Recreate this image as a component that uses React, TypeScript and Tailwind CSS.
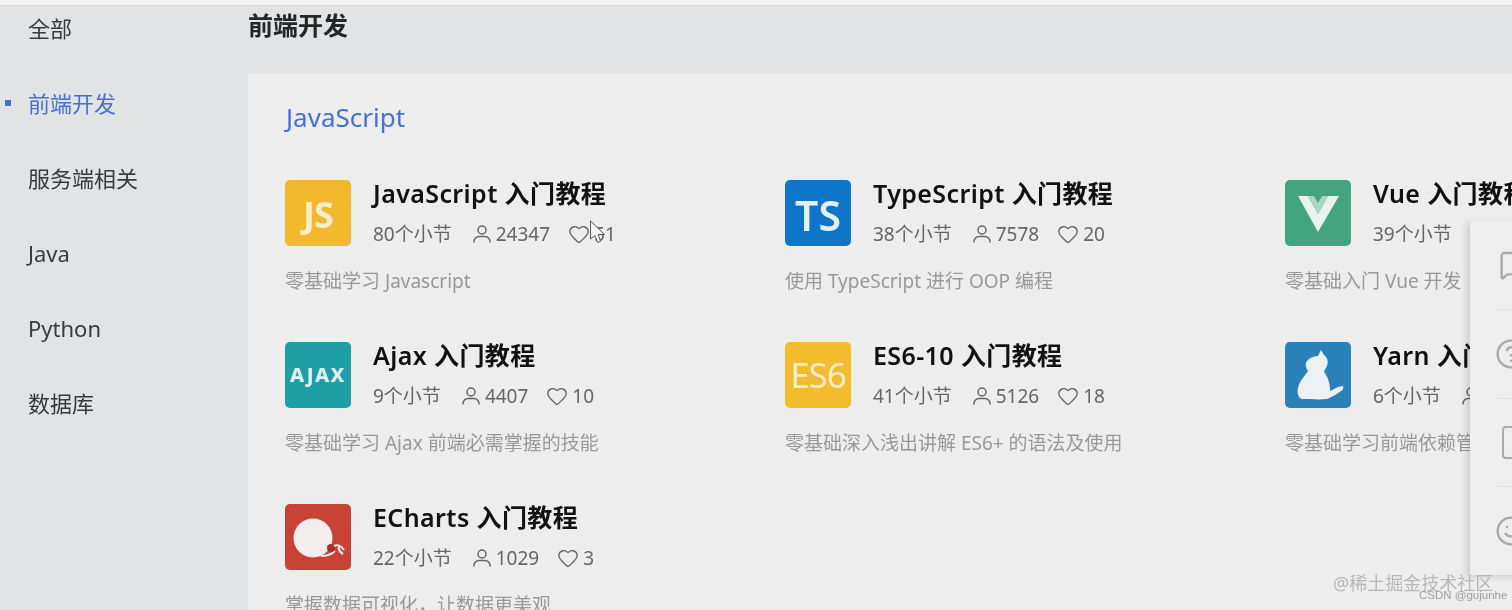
import { Heart, MessageSquare, HelpCircle, Smile } from "lucide-react"
import type { ReactNode } from "react"

const navs = ["全部", "前端开发", "服务端相关", "Java", "Python", "数据库"]

function VueLogo() {
    return (
        <svg viewBox="0 0 66 66" className="w-full h-full">
            <path d="M13 16 H23 L33 34 L43 16 H54 L33 52 Z" fill="#e8f2ef" />
            <path d="M23 16 H29 L33 23 L37 16 H43 L33 34 Z" fill="#a9d6c5" />
        </svg>
    )
}

function YarnLogo() {
    return (
        <svg viewBox="0 0 66 66" className="w-full h-full">
            <path
                d="M36 8 L39 13 C43 16 44 21 41 26 C40 28 39 29 39 30 C43 35 45 41 45 49 C49 47 54 44 58 44 C59 46 58 48 56 49 C52 52 47 55 42 57 C34 58 24 57 17 57 C13 56 12 50 13 46 C14 40 19 35 23 29 C20 25 20 20 23 18 C26 15 30 14 33 14 Z"
                fill="#edf1f4"
            />
        </svg>
    )
}

function EchartsLogo() {
    return (
        <svg viewBox="0 0 66 66" className="w-full h-full">
            <circle cx="28" cy="34" r="19.5" fill="#f1eeec" />
            <path d="M36 52 C42 52 47 50 50 47" stroke="#f1eeec" strokeWidth="2" fill="none" />
            <circle cx="46" cy="44" r="4" fill="#a8322a" />
            <path d="M49 42 C53 40 57 43 59 46 M54 43 C53 46 55 48 58 50" stroke="#f1eeec" strokeWidth="2.2" fill="none" />
        </svg>
    )
}

function UserIcon() {
    return (
        <svg viewBox="0 0 18 18" className="size-[18px] shrink-0 mr-[5px]" fill="none" stroke="currentColor" strokeWidth="1.5">
            <circle cx="9" cy="5" r="4" />
            <path d="M1 17.5 V16.5 A5 5 0 0 1 6 11.5 H12 A5 5 0 0 1 17 16.5 V17.5" />
        </svg>
    )
}

function TextLogo({ text, className }: { text: string; className: string }) {
    return <span className={`select-none ${className}`}>{text}</span>
}

const courses: { title: string; meta: string; users: string; likes: string; desc: string; bg: string; logo: ReactNode }[] = [
    {
        title: "JavaScript 入门教程", meta: "80个小节", users: "24347", likes: "51", desc: "零基础学习 Javascript", bg: "bg-[#f2b92f]",
        logo: <TextLogo text="JS" className="text-[36px] font-bold text-[#fbeccb] tracking-[-1px] pt-[3px]" />,
    },
    {
        title: "TypeScript 入门教程", meta: "38个小节", users: "7578", likes: "20", desc: "使用 TypeScript 进行 OOP 编程", bg: "bg-[#0f75c8]",
        logo: <TextLogo text="TS" className="text-[41px] font-semibold text-[#e4f0f8] pt-[5px]" />,
    },
    {
        title: "Vue 入门教程", meta: "39个小节", users: "", likes: "", desc: "零基础入门 Vue 开发", bg: "bg-[#43a47f]",
        logo: <VueLogo />,
    },
    {
        title: "Ajax 入门教程", meta: "9个小节", users: "4407", likes: "10", desc: "零基础学习 Ajax 前端必需掌握的技能", bg: "bg-[#1f9ea6]",
        logo: <TextLogo text="AJAX" className="text-[20px] font-extrabold text-[#dff1f1] tracking-[1.5px]" />,
    },
    {
        title: "ES6-10 入门教程", meta: "41个小节", users: "5126", likes: "18", desc: "零基础深入浅出讲解 ES6+ 的语法及使用", bg: "bg-[#f2bc2c]",
        logo: <TextLogo text="ES6" className="text-[35px] text-[#fbeccb] tracking-[-1px]" />,
    },
    {
        title: "Yarn 入门教程", meta: "6个小节", users: "3102", likes: "6", desc: "零基础学习前端依赖管理工具 Yarn", bg: "bg-[#2a82b8]",
        logo: <YarnLogo />,
    },
    {
        title: "ECharts 入门教程", meta: "22个小节", users: "1029", likes: "3", desc: "掌握数据可视化，让数据更美观", bg: "bg-[#c64335]",
        logo: <EchartsLogo />,
    },
]

export default function App() {
    return (
        <div className="h-[610px] w-[1512px] overflow-hidden relative blur-[0.4px] bg-[#e1e3e5] text-[#333] font-['Noto_Sans','Noto_Sans_CJK_SC',sans-serif]">
            <div className="h-[6px] bg-[#f1f1f1] border-b border-[#d6d6d6]" />
            <div className="flex">
                <Sidebar />
                <main className="flex-1 min-w-0">
                    <h1 className="text-[25px] leading-[36px] font-bold text-[#262626] mt-[1px] mb-[31px]">前端开发</h1>
                    <section className="bg-[#ededee] pl-[37px] pt-[25px]">
                        <h2 className="text-[26px] leading-[36px] text-[#4470d8] ml-[1px]">JavaScript</h2>
                        <div className="grid grid-cols-[500px_500px_500px] mt-[45px]">
                            {courses.map((c) => (
                                <CourseCard key={c.title} {...c} />
                            ))}
                        </div>
                    </section>
                </main>
            </div>
            <SidePanel />
            <Cursor />
            <div className="absolute left-[1333px] top-[570px] text-[18px] leading-[26px] text-[#b8b8b8] whitespace-nowrap">@稀土掘金技术社区</div>
            <div className="absolute left-[1419px] top-[588px] text-[11.5px] leading-[14px] text-[#a0a0a0] font-['Liberation_Sans',sans-serif] whitespace-nowrap">CSDN @gujunhe</div>
        </div>
    )
}

function Sidebar() {
    return (
        <aside className="w-[248px] shrink-0 flex flex-col gap-[45px] pt-[7px]">
            {navs.map((n) => (
                <div key={n} className={`relative pl-[28px] h-[30px] leading-[30px] text-[22px] ${n === "前端开发" ? "text-[#4470d8]" : "text-[#3a3a3a]"}`}>
                    {n === "前端开发" && <span className="absolute left-[5px] top-[12px] w-[6px] h-[6px] bg-[#4470d8]" />}
                    {n}
                </div>
            ))}
        </aside>
    )
}

function CourseCard({ title, meta, users, likes, desc, bg, logo }: (typeof courses)[number]) {
    return (
        <div className="h-[162px] pr-[20px] whitespace-nowrap">
            <div className="flex gap-[22px]">
                <div className={`w-[66px] h-[66px] rounded-[5px] shrink-0 flex items-center justify-center overflow-hidden ${bg}`}>{logo}</div>
                <div>
                    <div className="text-[25px] leading-[30px] font-semibold tracking-[0.4px] text-[#111] -mt-[2px]">{title}</div>
                    <div className="flex items-center text-[19px] leading-[28px] text-[#666] mt-[12px]">
                        <span className="mr-[21px]">{meta}</span>
                        <UserIcon />
                        <span className="mr-[18px]">{users}</span>
                        <Heart className="size-[22px] shrink-0 mr-[4px]" strokeWidth={1.5} />
                        <span>{likes}</span>
                    </div>
                </div>
            </div>
            <div className="text-[19px] leading-[28px] text-[#999] mt-[19px]">{desc}</div>
        </div>
    )
}

function SidePanel() {
    return (
        <div className="absolute left-[1470px] top-[221px] w-[120px] h-[354px] bg-[#eeeeef] shadow-[-4px_2px_6px_rgba(0,0,0,0.13)] flex flex-col text-[#aaa]">
            <div className="flex-1 ml-[27px] pl-[2px] flex items-center border-b border-[#e0e0e0]">
                <MessageSquare className="size-[32px]" strokeWidth={1.8} />
            </div>
            <div className="flex-1 ml-[27px] -mx-[2px] flex items-center border-b border-[#e0e0e0]">
                <HelpCircle className="size-[32px] -ml-[2px]" strokeWidth={1.8} />
            </div>
            <div className="flex-1 ml-[27px] pl-[5px] flex items-center border-b border-[#e0e0e0]">
                <span className="w-[28px] h-[33px] rounded-[4px] border-[2.5px] border-[#aaa]" />
            </div>
            <div className="flex-1 ml-[27px] flex items-center">
                <Smile className="size-[32px] -ml-[2px]" strokeWidth={1.8} />
            </div>
        </div>
    )
}

function Cursor() {
    return (
        <svg className="absolute left-[589px] top-[220px]" width="18" height="24" viewBox="0 0 18 24">
            <path d="M1.5 1 L1.5 19 L6 15.5 L8.5 22.5 L11.5 21.3 L9.2 14.5 L15.5 14.5 Z" fill="#f4f4f4" stroke="#555" strokeWidth="1" />
        </svg>
    )
}
